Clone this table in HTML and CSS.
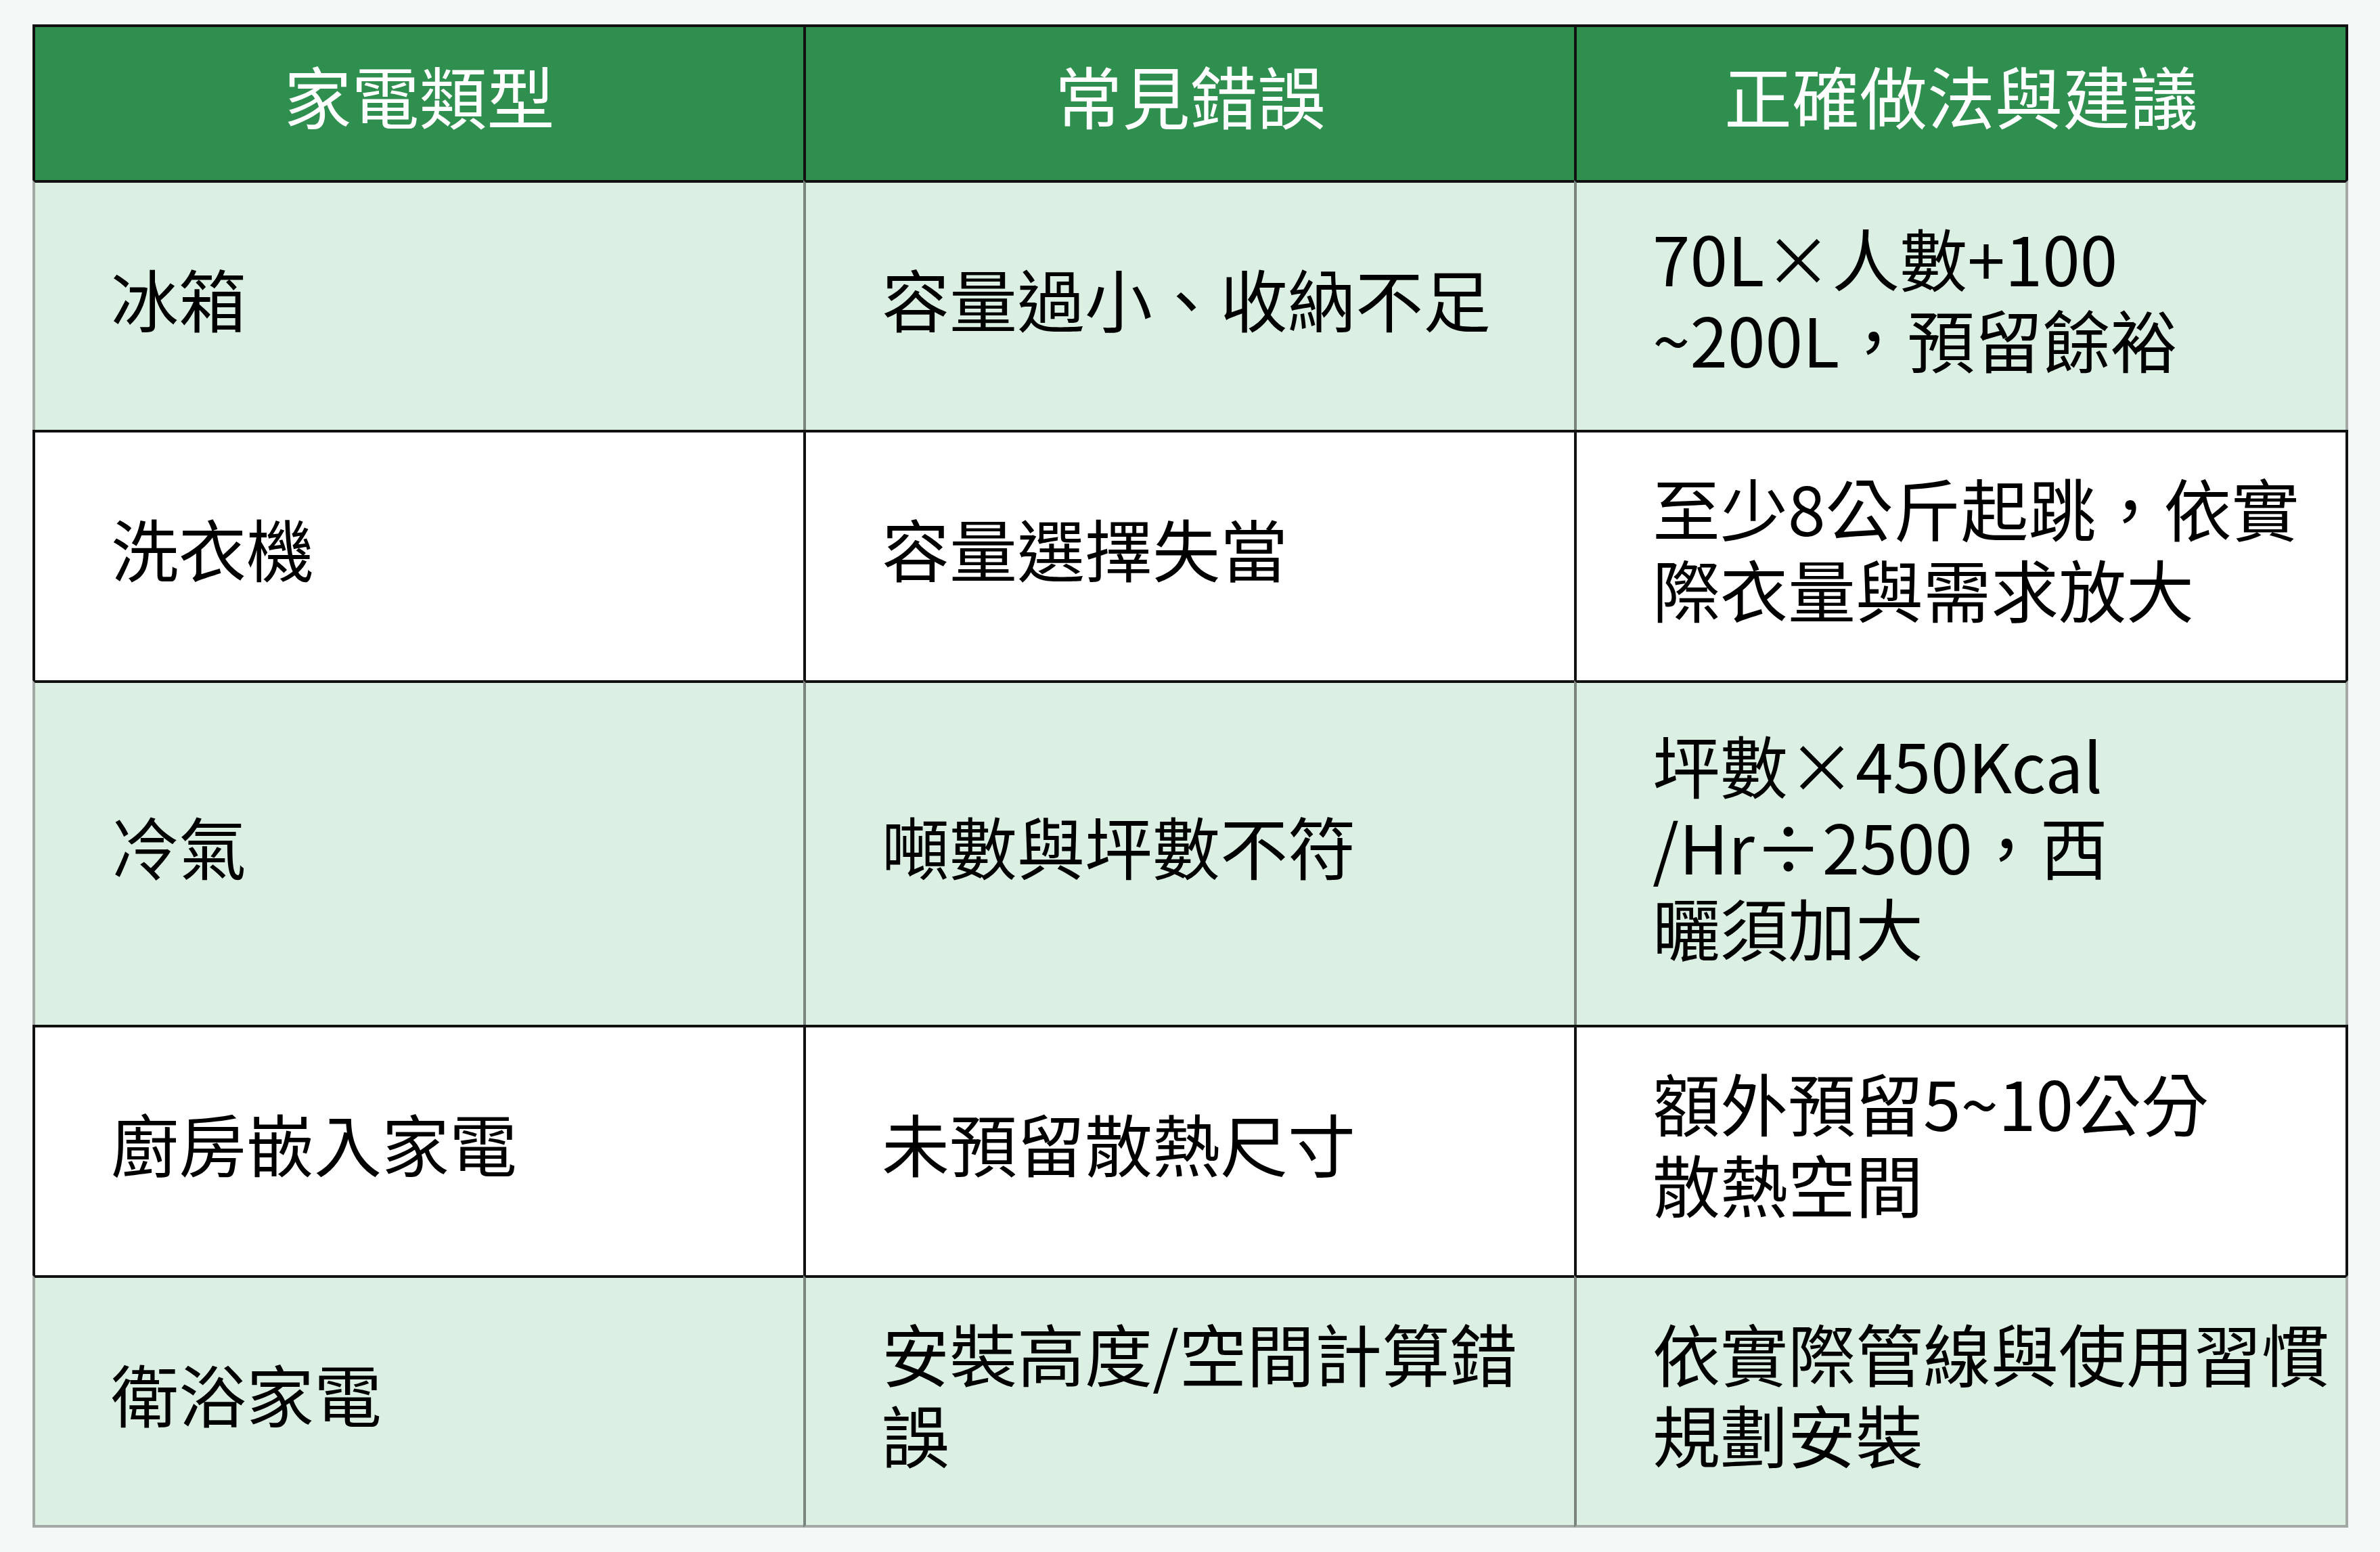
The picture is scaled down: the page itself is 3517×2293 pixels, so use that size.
FILE: index.html
```html
<!DOCTYPE html>
<html lang="zh-Hant">
<head>
<meta charset="utf-8">
<title>家電尺寸常見錯誤</title>
<link rel="stylesheet" href="styles.css">
</head>
<body>
<div class="page">
  <div class="grid">
    <div class="cell head c1">家電類型</div>
    <div class="cell head c2">常見錯誤</div>
    <div class="cell head c3">正確做法與建議</div>

    <div class="cell green c1">冰箱</div>
    <div class="cell green c2">容量過小、收納不足</div>
    <div class="cell green c3">70L×人數+100<br>~200L，預留餘裕</div>

    <div class="cell white c1">洗衣機</div>
    <div class="cell white c2">容量選擇失當</div>
    <div class="cell white c3">至少8公斤起跳，依實<br>際衣量與需求放大</div>

    <div class="cell green c1">冷氣</div>
    <div class="cell green c2">噸數與坪數不符</div>
    <div class="cell green c3">坪數×450Kcal<br>/Hr÷2500，西<br>曬須加大</div>

    <div class="cell white c1">廚房嵌入家電</div>
    <div class="cell white c2">未預留散熱尺寸</div>
    <div class="cell white c3">額外預留5~10公分<br>散熱空間</div>

    <div class="cell green c1 last">衛浴家電</div>
    <div class="cell green c2 last">安裝高度/空間計算錯<br>誤</div>
    <div class="cell green c3 last">依實際管線與使用習慣<br>規劃安裝</div>
  </div>
</div>
</body>
</html>
```

FILE: styles.css
```css
html, body {
  margin: 0;
  padding: 0;
  background: #f4f8f6;
}

.page {
  padding: 36px 47px 36px 48px;
  font-family: "Noto Sans CJK TC", "Noto Sans", sans-serif;
}

.grid {
  display: grid;
  grid-template-columns: 1139px 1139px 1144px;
  grid-template-rows: 230px 369px 370px 509px 370px 373px;
  width: 3422px;
}

.cell {
  box-sizing: border-box;
  display: flex;
  flex-direction: column;
  justify-content: center;
  align-items: flex-start;
  padding: 0 0 26px 112px;
  font-size: 100px;
  line-height: 120px;
  white-space: nowrap;
  color: #000;
  border-top: 4px solid #111;
  border-left: 4px solid #111;
}

.cell.c3 {
  border-right: 4px solid #111;
}

.cell.head {
  background: #2f8f4f;
  color: #fff;
  align-items: center;
  padding-left: 0;
}

.cell.white {
  background: #ffffff;
}

.cell.green {
  background: #dbefe3;
  border-left-color: #7a847e;
}

.cell.green.c1 {
  border-left-color: #a3aaa6;
}

.cell.green.c3 {
  border-right-color: #a3aaa6;
}

.cell.last {
  border-bottom: 4px solid #a3aaa6;
}
```
